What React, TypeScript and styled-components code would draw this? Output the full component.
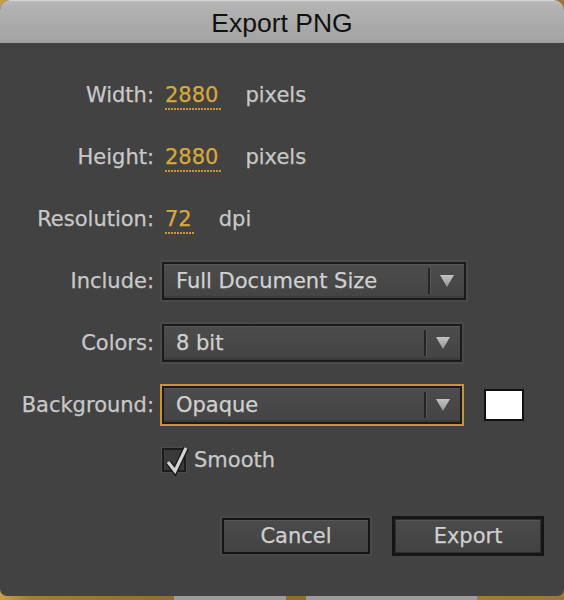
import React from "react";
import styled, { createGlobalStyle } from "styled-components";

const GlobalStyle = createGlobalStyle`
  html, body { margin: 0; padding: 0; }
  body {
    width: 564px;
    height: 600px;
    overflow: hidden;
    background: linear-gradient(
      to right,
      #c9a14b 0px,
      #a07e38 30px,
      #8f6f2e 174px,
      #9c9c9c 174px,
      #9c9c9c 286px,
      #8e6e2d 286px,
      #8e6e2d 306px,
      #9c9c9c 306px,
      #9c9c9c 477px,
      #a07d37 477px,
      #9a7733 564px
    );
    font-family: "DejaVu Sans", Verdana, sans-serif;
  }
`;

const Window = styled.div`
  width: 564px;
  height: 596px;
  box-sizing: border-box;
  background: #424242;
  border-radius: 10px 10px 7px 7px;
  overflow: hidden;
  display: flex;
  flex-direction: column;
`;

const TitleBar = styled.header`
  flex: none;
  height: 43px;
  box-sizing: border-box;
  padding-top: 3px;
  background: linear-gradient(#bcbcbc, #b3b3b3 10%, #a3a3a3);
  border-top: 1px solid #d4d4d4;
  border-bottom: 1px solid #9c9c9c;
  display: flex;
  align-items: center;
  justify-content: center;
  font-family: "Liberation Sans", Arial, sans-serif;
  font-size: 26.5px;
  color: #111111;
`;

const Content = styled.div`
  padding-top: 31px;
  display: flex;
  flex-direction: column;
  -webkit-text-stroke: 0.25px currentColor;
`;

const Form = styled.div`
  display: grid;
  grid-template-columns: 154px auto;
  grid-auto-rows: 42px;
  column-gap: 6px;
  row-gap: 20px;
  justify-content: start;
`;

const Label = styled.div`
  text-align: right;
  line-height: 42px;
  font-size: 21px;
  color: #c8c8c8;
  white-space: nowrap;
`;

const TextCell = styled.div`
  line-height: 42px;
  font-size: 21px;
  color: #c8c8c8;
  white-space: nowrap;
`;

const Value = styled.span`
  display: inline-block;
  line-height: 21px;
  margin-left: 5px;
  margin-right: 24px;
  padding: 0 3px 4px 0;
  color: #d8a93a;
  background-image: linear-gradient(to right, #c9982f 0 2px, transparent 2px 3px);
  background-size: 3px 2px;
  background-repeat: repeat-x;
  background-position: left bottom;
`;

const SelectCell = styled.div`
  display: flex;
  align-items: center;
  gap: 20px;
`;

const Select = styled.div<{ $width: number; $focused?: boolean }>`
  width: ${(p) => p.$width}px;
  height: 38px;
  margin: 2px;
  box-sizing: border-box;
  border: 2px solid #1b1b1b;
  box-shadow: 0 0 0 2px ${(p) => (p.$focused ? "#c7962f" : "#4a4a4a")},
    inset 0 1px 0 #565656, inset 0 -2px 0 #3b3b3b;
  background: linear-gradient(#4c4c4c, #444444);
  display: flex;
  align-items: center;
`;

const SelectText = styled.span`
  flex: 1;
  padding-left: 12px;
  font-size: 21px;
  color: #d0d0d0;
  white-space: nowrap;
`;

const Separator = styled.span`
  width: 2px;
  height: 26px;
  background: #252525;
  box-shadow: 1px 0 0 #565656;
`;

const ArrowBox = styled.span`
  width: 34px;
  display: flex;
  align-items: center;
  justify-content: center;
`;

const Swatch = styled.div`
  width: 40px;
  height: 32px;
  box-sizing: border-box;
  border: 2px solid #111111;
  background: #ffffff;
`;

const CheckRow = styled.label`
  display: flex;
  align-items: center;
  gap: 8px;
  height: 28px;
  margin: 20px 0 0 162px;
  font-size: 21px;
  color: #c8c8c8;
`;

const CheckBox = styled.span`
  position: relative;
  width: 24px;
  height: 24px;
  box-sizing: border-box;
  border: 2px solid #1c1c1c;
  background: #3a3a3a;
  box-shadow: 0 0 0 1px #4c4c4c;
`;

const CheckMark = styled.svg`
  position: absolute;
  left: -2px;
  top: -4px;
  overflow: visible;
`;

const ButtonRow = styled.div`
  display: flex;
  justify-content: flex-end;
  align-items: center;
  gap: 20px;
  padding-right: 20px;
  margin-top: 42px;
`;

const Button = styled.button<{ $primary?: boolean }>`
  box-sizing: border-box;
  width: ${(p) => (p.$primary ? 152 : 148)}px;
  height: ${(p) => (p.$primary ? 40 : 36)}px;
  margin: ${(p) => (p.$primary ? 0 : 2)}px;
  padding: 0;
  border: ${(p) => (p.$primary ? 3 : 2)}px solid #151515;
  box-shadow: ${(p) =>
    p.$primary
      ? "inset 0 0 0 1px #2e2e2e, inset 0 2px 0 #555555"
      : "0 0 0 2px #4a4a4a, inset 0 1px 0 #565656"};
  background: linear-gradient(#4b4b4b, #424242);
  color: #cfcfcf;
  font-family: "DejaVu Sans", Verdana, sans-serif;
  font-size: 21px;
  -webkit-text-stroke: 0.25px currentColor;
`;

const Arrow = () => (
  <svg width="14" height="12" viewBox="0 0 14 12">
    <defs>
      <linearGradient id="arr" x1="0" y1="0" x2="0" y2="1">
        <stop offset="0" stopColor="#c4c4c4" />
        <stop offset="1" stopColor="#949494" />
      </linearGradient>
    </defs>
    <path d="M0 0 H14 L7 12 Z" fill="url(#arr)" stroke="none" />
  </svg>
);

const Dropdown = ({ text, width, focused }: { text: string; width: number; focused?: boolean }) => (
  <Select $width={width} $focused={focused}>
    <SelectText>{text}</SelectText>
    <Separator />
    <ArrowBox>
      <Arrow />
    </ArrowBox>
  </Select>
);

export default function App() {
  return (
    <>
      <GlobalStyle />
      <Window>
        <TitleBar>Export PNG</TitleBar>
        <Content>
          <Form>
            <Label>Width:</Label>
            <TextCell>
              <Value>2880</Value>pixels
            </TextCell>
            <Label>Height:</Label>
            <TextCell>
              <Value>2880</Value>pixels
            </TextCell>
            <Label>Resolution:</Label>
            <TextCell>
              <Value>72</Value>dpi
            </TextCell>
            <Label>Include:</Label>
            <SelectCell>
              <Dropdown text="Full Document Size" width={304} />
            </SelectCell>
            <Label>Colors:</Label>
            <SelectCell>
              <Dropdown text="8 bit" width={300} />
            </SelectCell>
            <Label>Background:</Label>
            <SelectCell>
              <Dropdown text="Opaque" width={300} focused />
              <Swatch />
            </SelectCell>
          </Form>
          <CheckRow>
            <CheckBox>
              <CheckMark width="28" height="30" viewBox="-2 -4 28 30">
                <polyline points="4,12 11,21 22,-2" fill="none" stroke="#1a1a1a" strokeWidth="6" />
                <polyline points="4,12 11,21 22,-2" fill="none" stroke="#d2d2d2" strokeWidth="3.2" />
              </CheckMark>
            </CheckBox>
            Smooth
          </CheckRow>
          <ButtonRow>
            <Button>Cancel</Button>
            <Button $primary>Export</Button>
          </ButtonRow>
        </Content>
      </Window>
    </>
  );
}
